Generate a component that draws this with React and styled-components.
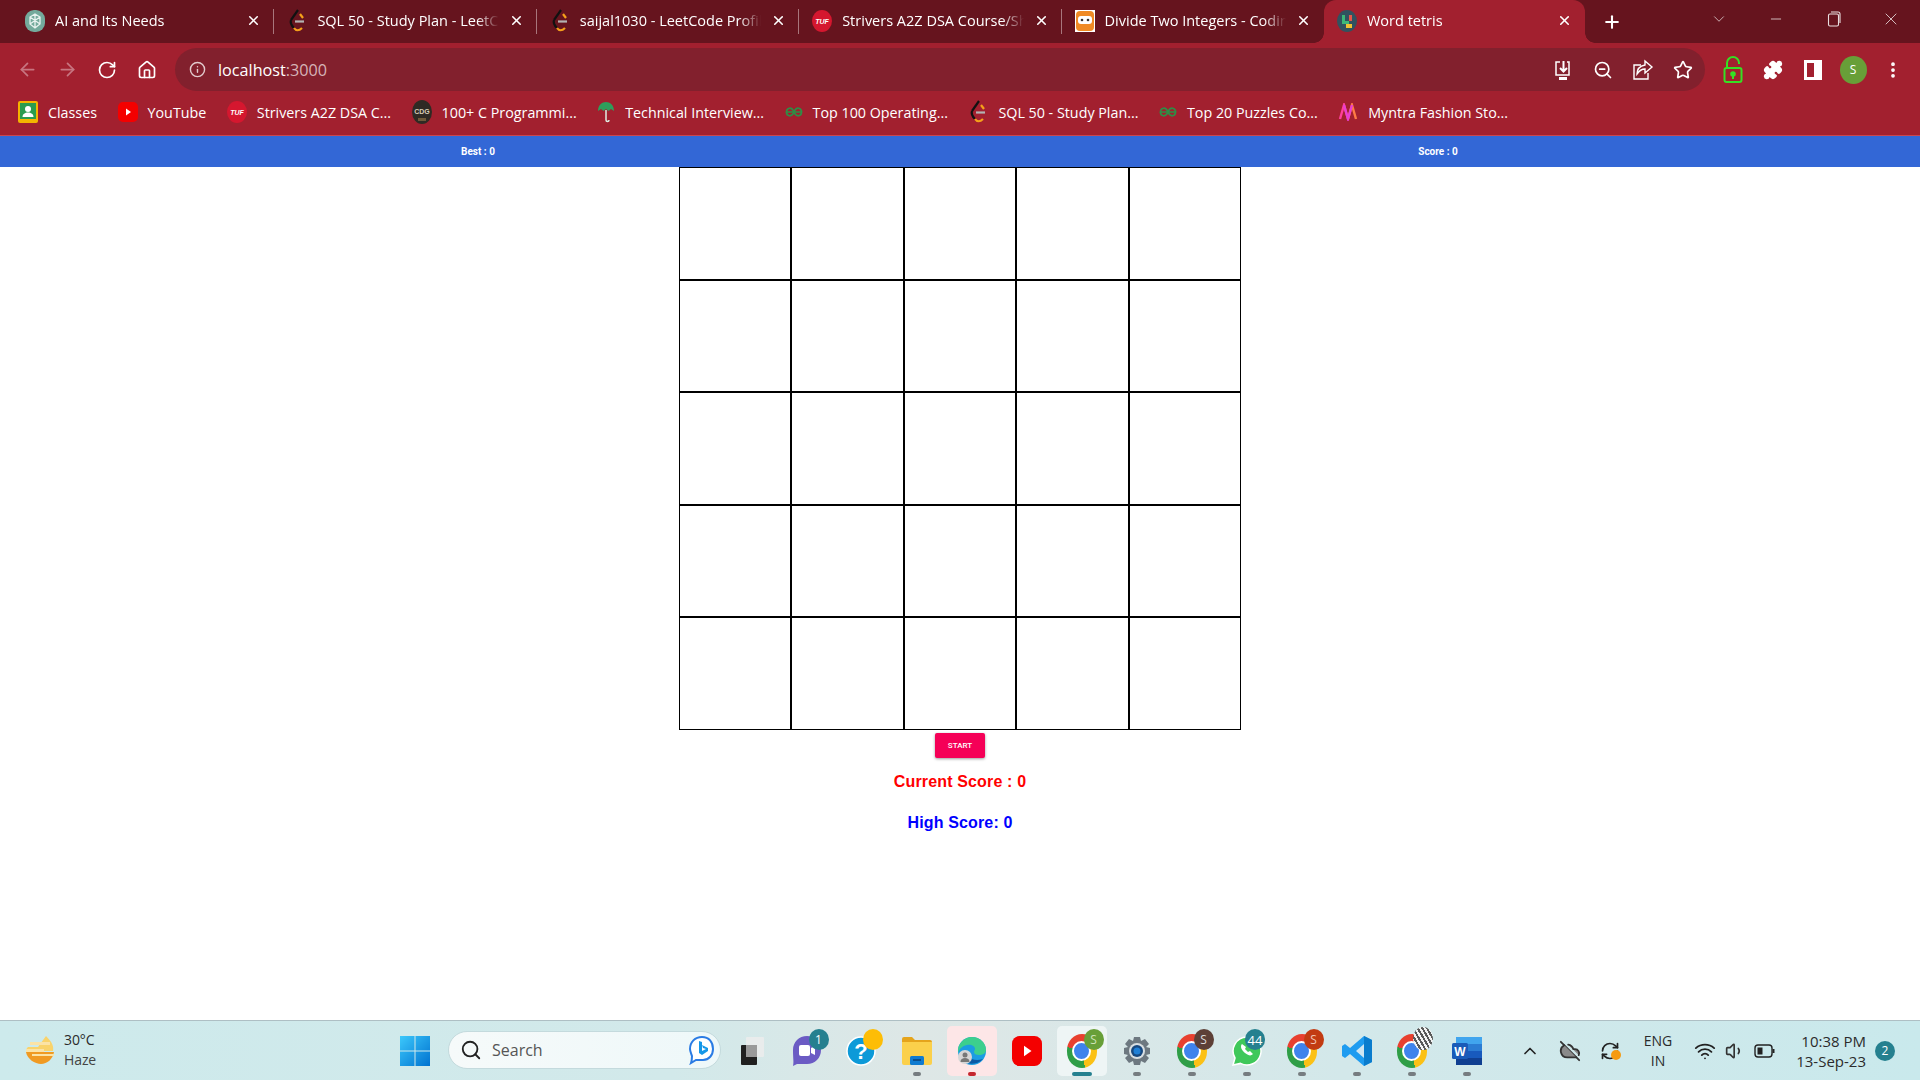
import React from "react";
import styled, { createGlobalStyle } from "styled-components";
import {
  ArrowLeft, ArrowRight, RotateCw, Home, Info, ZoomOut, Star, Puzzle, X, Plus,
  ChevronDown, ChevronUp, Minus, EllipsisVertical, Wifi, Volume1, CloudOff, RefreshCw, Search,
} from "lucide-react";

const GlobalStyle = createGlobalStyle`
  html, body { margin: 0; padding: 0; background: #fff; }
  * { box-sizing: border-box; }
`;

const Page = styled.div`
  width: 1920px;
  height: 1080px;
  display: flex;
  flex-direction: column;
  overflow: hidden;
  font-family: "Open Sans", "Liberation Sans", sans-serif;
`;

/* ---- tab strip ---- */
const TabStrip = styled.div`
  height: 43px;
  flex: none;
  display: flex;
  align-items: stretch;
  padding-left: 12px;
  background: #66141e;
  color: #fff;
`;

const Tab = styled.div`
  position: relative;
  width: ${(p) => (p.$active ? "261px" : "262.4px")};
  display: flex;
  align-items: center;
  gap: 10px;
  padding: 0 13px 2px;
  font-size: 14.5px;
  background: ${(p) => (p.$active ? "#a2202f" : "transparent")};
  border-radius: ${(p) => (p.$active ? "12px 12px 0 0" : "0")};
  &::after {
    content: "";
    display: ${(p) => (p.$sep ? "block" : "none")};
    position: absolute;
    right: 0;
    top: 9px;
    width: 1px;
    height: 25px;
    background: #a8767c;
  }
`;

/* the concave corners at the foot of the active tab */
const TabFlare = styled.span`
  position: absolute;
  bottom: 0;
  ${(p) => (p.$side === "left" ? "left: -10px;" : "right: -10px;")}
  width: 10px;
  height: 10px;
  background: radial-gradient(
    circle at ${(p) => (p.$side === "left" ? "0 0" : "100% 0")},
    transparent 9.5px,
    #a2202f 10px
  );
`;

const TabTitle = styled.span`
  flex: 1;
  overflow: hidden;
  white-space: nowrap;
  -webkit-mask-image: linear-gradient(to right, #000 calc(100% - 22px), transparent);
  mask-image: linear-gradient(to right, #000 calc(100% - 22px), transparent);
`;

const NewTab = styled.div`
  display: flex;
  align-items: center;
  margin-left: 17px;
`;

const WindowControls = styled.div`
  margin-left: auto;
  display: flex;
  align-items: flex-start;
  padding-top: 6px;
`;

const WindowButton = styled.div`
  width: 57.5px;
  height: 26px;
  display: flex;
  align-items: center;
  justify-content: center;
  color: #eadfe0;
`;

const RestoreIcon = () => (
  <svg width="14" height="16" viewBox="0 0 14 16" fill="none" stroke="#eadfe0" strokeWidth="1.1">
    <rect x="1.5" y="3" width="10" height="12" rx="1.5" />
    <path d="M4 1h7a2 2 0 0 1 2 2v9" />
  </svg>
);

/* ---- toolbar ---- */
const Toolbar = styled.div`
  height: 53px;
  flex: none;
  display: flex;
  align-items: flex-start;
  padding: 5px 0 0 7px;
  background: #a2202f;
  color: #fff;
`;

const NavButton = styled.div`
  width: 40px;
  height: 43px;
  display: flex;
  align-items: center;
  justify-content: center;
  color: ${(p) => (p.$muted ? "#c77580" : "#fff")};
`;

const Omnibox = styled.div`
  width: 1530px;
  height: 43px;
  margin-left: 8px;
  display: flex;
  align-items: center;
  padding: 0 2px 0 14px;
  border-radius: 22px;
  background: #82202d;
  font-size: 16.2px;
`;

const Url = styled.span`
  margin-left: 12px;
  color: #fff;
  span { color: #d6b4b8; }
`;

const OmniActions = styled.div`
  margin-left: auto;
  display: flex;
  color: #dcc4c8;
`;

const ToolbarActions = styled.div`
  display: flex;
  margin-left: 8px;
`;

const Avatar = styled.div`
  width: 27px;
  height: 28px;
  border-radius: 50%;
  display: flex;
  align-items: center;
  justify-content: center;
  background: #689f38;
  color: #fff;
  font-size: 12px;
`;

/* ---- bookmarks ---- */
const BookmarksBar = styled.div`
  height: 40px;
  flex: none;
  display: flex;
  align-items: flex-start;
  padding: 4px 0 0 18px;
  background: #a2202f;
  color: #fff;
  font-size: 14.3px;
  border-bottom: 1px solid #c9454f;
`;

const Bookmark = styled.div`
  display: flex;
  align-items: center;
  gap: 10px;
  height: 24px;
  white-space: nowrap;
  margin-right: 20.5px;
`;

/* ---- the game ---- */
const ScoreBar = styled.div`
  height: 31px;
  flex: none;
  display: grid;
  grid-template-columns: 1fr 1fr;
  align-items: center;
  background: #3367d6;
  color: #fff;
  font-family: Roboto, sans-serif;
  font-size: 10px;
  font-weight: 700;
  text-align: center;
`;

const ScoreLabel = styled.div`
  padding-right: 4px;
`;

const Main = styled.main`
  flex: 1;
  display: flex;
  flex-direction: column;
  align-items: center;
  background: #fff;
`;

const Board = styled.div`
  width: 562px;
  height: 563px;
  flex: none;
  display: grid;
  grid-template-columns: repeat(5, 1fr);
  grid-template-rows: repeat(5, 1fr);
`;

const Cell = styled.div`
  border: 1px solid #000;
`;

const StartButton = styled.button`
  width: 50px;
  height: 25px;
  margin-top: 3px;
  border: 0;
  border-radius: 2px;
  padding: 0;
  background: #f50057;
  color: #fff;
  font-family: Roboto, sans-serif;
  font-size: 8px;
  font-weight: 500;
  box-shadow: 0 1px 3px rgba(0, 0, 0, 0.4);
`;

const ScoreLine = styled.div`
  margin-top: ${(p) => p.$top}px;
  color: ${(p) => p.$color};
  font-family: "Liberation Sans", Arial, sans-serif;
  font-size: 16px;
  line-height: 18px;
  font-weight: 700;
  letter-spacing: 0.15px;
`;

/* ---- taskbar ---- */
const Taskbar = styled.div`
  height: 60px;
  flex: none;
  display: flex;
  align-items: stretch;
  border-top: 1px solid #aebfc4;
  background: linear-gradient(90deg, #cdeaec 0%, #d2e9ea 35%, #dee7e6 48%, #d3e8ea 70%, #c9e9ec 100%);
  color: #2b2b2b;
`;

const Weather = styled.div`
  width: 400px;
  display: flex;
  align-items: center;
  gap: 8px;
  padding: 0 0 2px 24px;
  font-size: 14px;
  line-height: 20px;
  letter-spacing: -0.1px;
`;

const WeatherText = styled.div`
  span { display: block; color: #444; }
`;

const StartSlot = styled.div`
  width: 30px;
  display: flex;
  align-items: center;
  justify-content: center;
`;

const SearchBox = styled.div`
  width: 273px;
  height: 38px;
  margin: 10px 3px 0 18px;
  display: flex;
  align-items: center;
  gap: 10px;
  padding: 0 5px 0 11px;
  border-radius: 19px;
  background: linear-gradient(90deg, #f6fafa, #eef8f9);
  border: 1px solid #c4dadd;
  color: #555;
  font-size: 16px;
  svg:last-child { margin-left: auto; }
`;

const AppSlot = styled.div`
  position: relative;
  width: ${(p) => p.$w || 55}px;
  display: flex;
  align-items: center;
  justify-content: center;
`;

const AppTile = styled.div`
  width: 50px;
  height: 50px;
  display: flex;
  align-items: center;
  justify-content: center;
  border-radius: 5px;
  background: ${(p) => p.$bg || "transparent"};
`;

const RunDot = styled.div`
  position: absolute;
  bottom: 4px;
  left: 50%;
  transform: translateX(-50%);
  width: ${(p) => p.$w || 8}px;
  height: 4px;
  border-radius: 2px;
  background: ${(p) => p.$color || "#767c80"};
`;

const Badge = styled.div`
  position: absolute;
  top: 8px;
  left: 50%;
  margin-left: ${(p) => p.$x ?? 2}px;
  min-width: 20px;
  height: 21px;
  padding: 0 3px;
  border-radius: 50%;
  display: flex;
  align-items: center;
  justify-content: center;
  background: ${(p) => p.$bg};
  color: ${(p) => p.$fg || "#fff"};
  font-size: ${(p) => p.$size || 12}px;
`;

const Tray = styled.div`
  margin-left: auto;
  display: flex;
  align-items: center;
  padding-right: 25px;
  font-size: 14px;
`;

const TrayIcon = styled.div`
  width: ${(p) => p.$w || 40}px;
  display: flex;
  justify-content: center;
  position: relative;
`;

const SyncDot = styled.div`
  position: absolute;
  right: 9px;
  bottom: 1px;
  width: 10px;
  height: 10px;
  border-radius: 50%;
  background: #f59a10;
`;

const Lang = styled.div`
  width: 56px;
  text-align: center;
  line-height: 20px;
`;

const Clock = styled.div`
  width: 82px;
  font-size: 15px;
  white-space: nowrap;
  line-height: 20px;
  display: flex;
  flex-direction: column;
  align-items: flex-end;
`;

const NotifyBadge = styled.div`
  width: 20px;
  height: 20px;
  margin-left: 9px;
  border-radius: 50%;
  display: flex;
  align-items: center;
  justify-content: center;
  background: #25808f;
  color: #fff;
  font-size: 12px;
`;

const ChromeBall = styled.div`
  width: 30px;
  height: 34px;
  border-radius: 50% / 48%;
  background: conic-gradient(from 50deg, #fbc116 0 120deg, #2f9e47 120deg 235deg, #e8402f 235deg 360deg);
  display: flex;
  align-items: center;
  justify-content: center;
  &::after {
    content: "";
    width: 15px;
    height: 16px;
    border-radius: 50%;
    background: #3f83ec;
    border: 2px solid #fff;
  }
`;

/* the last chrome profile has a picture rather than a letter */
const ProfilePicture = styled.div`
  position: absolute;
  top: 6px;
  left: 50%;
  margin-left: 1px;
  width: 20px;
  height: 23px;
  border-radius: 50%;
  background: repeating-linear-gradient(60deg, #f4f4f4 0 2px, #5a5a5a 2px 4px);
`;

/* favicons */
const GptIcon = () => (
  <svg width="20" height="22" viewBox="0 0 20 22">
    <rect width="20" height="22" rx="9" fill="#74aa9c" />
    <path d="M10 4l5 3v7l-5 4-5-4V7zM5 7l10 7M15 7L5 14M10 4v14" fill="none" stroke="#e9f3f0" strokeWidth="1.3" />
  </svg>
);
const LeetIcon = () => (
  <svg width="20" height="24" viewBox="0 0 20 24" fill="none" strokeWidth="2.2">
    <path d="M11 1L4 11" stroke="#111" />
    <path d="M4 11c-1 3 1 6 3 8" stroke="#111" />
    <path d="M7 19c2 3 5 3 8 0" stroke="#f5a01a" />
    <path d="M13 5l3 4" stroke="#f5a01a" />
    <path d="M8 12.5h9" stroke="#b3b3b3" />
  </svg>
);
const TufIcon = () => (
  <svg width="20" height="22" viewBox="0 0 20 22">
    <ellipse cx="10" cy="11" rx="10" ry="11" fill="#d5172f" />
    <text x="10" y="13.5" textAnchor="middle" fontSize="7" fontWeight="700" fontStyle="italic" fontFamily="Liberation Sans" fill="#fff">TUF</text>
  </svg>
);
const NinjaIcon = () => (
  <svg width="20" height="22" viewBox="0 0 20 22">
    <rect width="20" height="22" fill="#fff" />
    <rect x="1" y="1" width="18" height="20" rx="4" fill="#f08a24" />
    <rect x="3" y="6" width="14" height="8" rx="3" fill="#fff" />
    <circle cx="7" cy="10" r="1.3" fill="#333" />
    <circle cx="13" cy="10" r="1.3" fill="#333" />
  </svg>
);
const TetrisIcon = () => (
  <svg width="20" height="22" viewBox="0 0 20 22">
    <ellipse cx="10" cy="11" rx="10" ry="11" fill="#31525f" />
    <path d="M5 5h3v6h4v3H5z" fill="#3cb878" />
    <path d="M12 5h3v6h-3z" fill="#e2574c" />
    <path d="M9 14h6v4H9z" fill="#f2c230" />
  </svg>
);
const ClassroomIcon = () => (
  <svg width="20" height="22" viewBox="0 0 20 22">
    <rect width="20" height="22" rx="2" fill="#f4b400" />
    <rect x="2" y="2" width="16" height="16" fill="#2a9c4f" />
    <circle cx="10" cy="8" r="3" fill="#fff" />
    <path d="M4.5 16c0-3 2.5-4.5 5.5-4.5s5.500 1.500 5.500 4.500z" fill="#fff" />
  </svg>
);
const YoutubeIcon = ({ w = 20, h = 20 }) => (
  <svg width={w} height={h} viewBox="0 0 20 20">
    <rect width="20" height="20" rx="5" fill="#f40000" />
    <path d="M8 6.500l5 3.500-5 3.500z" fill="#fff" />
  </svg>
);
const CdgIcon = () => (
  <svg width="20" height="24" viewBox="0 0 20 24">
    <ellipse cx="10" cy="12" rx="10" ry="12" fill="#2f2a24" />
    <text x="10" y="14" textAnchor="middle" fontSize="7" fontWeight="700" fontFamily="Liberation Sans" fill="#d8cdb8">CDG</text>
    <path d="M6 18h8v3H6z" fill="#6f5a3a" />
  </svg>
);
const UmbrellaIcon = () => (
  <svg width="18" height="24" viewBox="0 0 18 24" fill="none">
    <path d="M1 11C1 5 5 2 9 2s8 3 8 9l-3-2-2.500 2L9 9l-2.500 2L4 9z" fill="#2e9e5b" />
    <path d="M9 10v10c0 2 3 2 3 0" stroke="#dfeee4" strokeWidth="1.5" />
  </svg>
);
const GfgIcon = () => (
  <svg width="18" height="14" viewBox="0 0 18 14" fill="none" stroke="#2f8d46" strokeWidth="1.700">
    <path d="M9 7H1.500c0-4 5-6 7.500 0 2.500 6 7.500 4 7.500 0H9" />
    <path d="M9 7c-2.500 6-7.500 4-7.500 0M9 7c2.500-6 7.500-4 7.500 0" />
  </svg>
);
const MyntraIcon = () => (
  <svg width="20" height="18" viewBox="0 0 20 18" fill="none" strokeWidth="2.400">
    <path d="M2 16L6 2l4 14" stroke="#ff3f9c" />
    <path d="M10 16l4-14 4 14" stroke="#ff7a45" />
    <path d="M6 2l4 14 4-14" stroke="#e83fd0" />
  </svg>
);

const DownloadBox = () => (
  <svg width="20" height="22" viewBox="0 0 20 22" fill="none" stroke="currentColor" strokeWidth="1.500">
    <path d="M7 3H3v13h13V3h-2" />
    <path d="M10.500 2v10M7 9l3.500 3.500L14 9" strokeWidth="2" />
    <path d="M6 19.500h8" strokeWidth="3" />
  </svg>
);
const ShareIcon = () => (
  <svg width="22" height="22" viewBox="0 0 22 22" fill="none" stroke="currentColor" strokeWidth="1.400">
    <path d="M9 6H2v14h14v-6" />
    <path d="M13 2l7 6-7 6v-4c-4 0-6 2-8 5 0-5 3-8 8-9z" />
  </svg>
);
const LockIcon = () => (
  <svg width="20" height="28" viewBox="0 0 20 28" fill="none" stroke="#35e024" strokeWidth="2">
    <rect x="1.500" y="12" width="17" height="14" rx="2" />
    <path d="M4 12V7a6 6 0 0 1 12 0v1" />
    <circle cx="10" cy="18" r="1.800" fill="#35e024" />
    <path d="M10 19v4" />
  </svg>
);
const SidePanel = () => (
  <svg width="18" height="20" viewBox="0 0 18 20">
    <path fillRule="evenodd" d="M0 0h18v20H0zM3 3v14h7V3z" fill="#fff" />
  </svg>
);
const BatteryIcon = () => (
  <svg width="22" height="14" viewBox="0 0 22 14" fill="none">
    <rect x="1" y="1" width="17" height="12" rx="3" stroke="#222" strokeWidth="1.400" />
    <rect x="3.500" y="3.500" width="5" height="7" fill="#222" />
    <path d="M19.500 5v4" stroke="#222" strokeWidth="2" />
  </svg>
);

/* taskbar icons */
const WindowsLogo = () => (
  <svg width="30" height="30" viewBox="0 0 30 30">
    <defs>
      <linearGradient id="win" x1="0" y1="0" x2="1" y2="1">
        <stop offset="0" stopColor="#3cc8fb" />
        <stop offset="1" stopColor="#0072d0" />
      </linearGradient>
    </defs>
    <path d="M0 0h14.500v14.500H0zM15.500 0H30v14.500H15.500zM0 15.500h14.500V30H0zM15.500 15.500H30V30H15.500z" fill="url(#win)" />
  </svg>
);
const WeatherIcon = () => (
  <svg width="32" height="30" viewBox="0 0 32 30">
    <path d="M22 1c6 6 8 10 7 15H2c0-2 1-3 2-4h10z" fill="#f9d36b" />
    <path d="M2 17h28c-1 7-7 12-13 12S3 24 2 17z" fill="#f09a22" />
    <path d="M6 7h20v3H6zM2 14h18v3H2zM8 19h22v2H8z" fill="#fbe3a6" />
  </svg>
);
const BingIcon = () => (
  <svg width="26" height="30" viewBox="0 0 26 30" fill="none">
    <path d="M13 2c7 0 11 5 11 12 0 6-4 11-10 11H7l-5 3c1-3 1-5 1-7C2 18 1 16 1 14 1 7 6 2 13 2z" fill="#fff" stroke="#2a7be4" strokeWidth="2" />
    <path d="M10 6l3 1v9l4-2-3-1-1-3 6 3v3l-6 4-3-2z" fill="#1597e8" />
  </svg>
);
const TaskViewIcon = () => (
  <svg width="24" height="30" viewBox="0 0 24 30">
    <rect x="0" y="9" width="16" height="20" rx="1" fill="#202020" />
    <rect x="5" y="1" width="18" height="20" rx="1" fill="#ececec" fillOpacity="0.85" />
    <rect x="5" y="9" width="11" height="12" fill="#9a9a9a" />
  </svg>
);
const MeetIcon = () => (
  <svg width="30" height="32" viewBox="0 0 30 32">
    <path d="M15 1c8 0 14 6 14 14s-6 14-14 14H5l-4 2c1-4 0-7 0-16C1 7 7 1 15 1z" fill="#6b5bc4" />
    <rect x="7" y="10" width="11" height="11" rx="2" fill="#fff" />
    <path d="M19 13l4-2v9l-4-2z" fill="#fff" />
  </svg>
);
const HelpIcon = () => (
  <svg width="30" height="32" viewBox="0 0 30 32">
    <circle cx="15" cy="16" r="14" fill="#0d9ad8" stroke="#fff" strokeWidth="1.500" />
    <text x="15" y="24" textAnchor="middle" fontSize="22" fontWeight="700" fontFamily="Liberation Sans" fill="#fff">?</text>
  </svg>
);
const FolderIcon = () => (
  <svg width="30" height="28" viewBox="0 0 30 28">
    <path d="M0 2a2 2 0 0 1 2-2h8l3 3h15a2 2 0 0 1 2 2v3H0z" fill="#e5a41c" />
    <path d="M0 5h30v21a2 2 0 0 1-2 2H2a2 2 0 0 1-2-2z" fill="#fbd04b" />
    <rect x="8" y="19" width="14" height="9" rx="1.500" fill="#0f7bd0" />
    <rect x="11" y="22" width="8" height="2" fill="#0a4e8c" />
  </svg>
);
const EdgeIcon = () => (
  <svg width="30" height="32" viewBox="0 0 30 32">
    <circle cx="15" cy="16" r="14" fill="#1b9de2" />
    <path d="M15 2c8 0 14 6 14 13 0 3-3 5-7 5-3 0-5-1-5-3 0-1 1-2 1-3 0-3-4-5-8-4C5 11 2 14 1 18 0 9 7 2 15 2z" fill="#3ccf8e" />
    <path d="M6 26c5 4 14 4 20-2-6 2-12 1-15-3z" fill="#0c59a4" />
    <circle cx="8" cy="22" r="7" fill="#d6d6d6" />
    <circle cx="8" cy="20" r="2.500" fill="#777" />
    <path d="M3.500 27c0-3 2-4 4.500-4s4.500 1 4.500 4z" fill="#777" />
  </svg>
);
const GearIcon = () => (
  <svg width="30" height="30" viewBox="0 0 30 30">
    <path d="M12 1h6l1 4 4-2 4 5-3 3 4 1v6l-4 1 3 3-4 5-4-2-1 4h-6l-1-4-4 2-4-5 3-3-4-1v-6l4-1-3-3 4-5 4 2z" fill="#6d7880" />
    <circle cx="15" cy="15" r="8" fill="#d9dfe2" />
    <circle cx="15" cy="15" r="6" fill="#17487f" />
    <circle cx="15" cy="15" r="3.500" fill="#1f7fd6" />
  </svg>
);
const WhatsappIcon = () => (
  <svg width="30" height="32" viewBox="0 0 30 32">
    <path d="M15 2a14 14 0 1 1-6.500 26.400L1 30l2-7A14 14 0 0 1 15 2z" fill="#3fc85a" stroke="#fff" strokeWidth="1.500" />
    <path d="M10 9c-2 2-1 6 3 9s6 3 8 1l-3-3-2 1-3-3 1-2z" fill="#fff" />
  </svg>
);
const VsCodeIcon = () => (
  <svg width="30" height="30" viewBox="0 0 30 30">
    <path d="M22 0l8 4v22l-8 4-14-12-5 4-3-2v-10l3-2 5 4z" fill="#1f9cf0" />
    <path d="M22 0l8 4v22l-8 4z" fill="#0a7ccd" />
    <path d="M22 8l-8 7 8 7z" fill="#d0e6f2" />
  </svg>
);
const WordIcon = () => (
  <svg width="30" height="28" viewBox="0 0 30 28">
    <rect x="4" y="0" width="26" height="7" fill="#41a5ee" />
    <rect x="4" y="7" width="26" height="7" fill="#2b7cd3" />
    <rect x="4" y="14" width="26" height="7" fill="#185abd" />
    <rect x="4" y="21" width="26" height="7" fill="#103f91" />
    <rect x="0" y="6" width="16" height="16" rx="1.500" fill="#1a5bb8" />
    <text x="8" y="19" textAnchor="middle" fontSize="12" fontWeight="700" fontFamily="Liberation Sans" fill="#fff">W</text>
  </svg>
);

const tabs = [
  { title: "AI and Its Needs", icon: <GptIcon /> },
  { title: "SQL 50 - Study Plan - LeetCode", icon: <LeetIcon /> },
  { title: "saijal1030 - LeetCode Profile", icon: <LeetIcon /> },
  { title: "Strivers A2Z DSA Course/Sheet", icon: <TufIcon /> },
  { title: "Divide Two Integers - Coding", icon: <NinjaIcon /> },
];

const bookmarks = [
  { title: "Classes", icon: <ClassroomIcon /> },
  { title: "YouTube", icon: <YoutubeIcon /> },
  { title: "Strivers A2Z DSA C...", icon: <TufIcon /> },
  { title: "100+ C Programmi...", icon: <CdgIcon /> },
  { title: "Technical Interview...", icon: <UmbrellaIcon /> },
  { title: "Top 100 Operating...", icon: <GfgIcon /> },
  { title: "SQL 50 - Study Plan...", icon: <LeetIcon /> },
  { title: "Top 20 Puzzles Co...", icon: <GfgIcon /> },
  { title: "Myntra Fashion Sto...", icon: <MyntraIcon /> },
];

const cells = Array.from({ length: 25 }, (_, i) => i);

export default function App() {
  return (
    <Page>
      <GlobalStyle />
      <TabStrip>
        {tabs.map((t, i) => (
          <Tab key={t.title} $sep={i < 4}>
            {t.icon}
            <TabTitle>{t.title}</TabTitle>
            <X size={15} strokeWidth={2.5} />
          </Tab>
        ))}
        <Tab $active>
          <TabFlare $side="left" />
          <TetrisIcon />
          <TabTitle>Word tetris</TabTitle>
          <X size={15} strokeWidth={2.5} />
          <TabFlare $side="right" />
        </Tab>
        <NewTab><Plus size={20} strokeWidth={2.5} /></NewTab>
        <WindowControls>
          <WindowButton><ChevronDown size={18} strokeWidth={1} /></WindowButton>
          <WindowButton><Minus size={16} strokeWidth={1.2} /></WindowButton>
          <WindowButton><RestoreIcon /></WindowButton>
          <WindowButton><X size={20} strokeWidth={1} /></WindowButton>
        </WindowControls>
      </TabStrip>

      <Toolbar>
        <NavButton $muted><ArrowLeft size={21} /></NavButton>
        <NavButton $muted><ArrowRight size={21} /></NavButton>
        <NavButton><RotateCw size={20} /></NavButton>
        <NavButton><Home size={20} /></NavButton>
        <Omnibox>
          <Info size={17} color="#e3cbce" />
          <Url>localhost<span>:3000</span></Url>
          <OmniActions>
            <NavButton><DownloadBox /></NavButton>
            <NavButton><ZoomOut size={20} /></NavButton>
            <NavButton><ShareIcon /></NavButton>
            <NavButton><Star size={20} /></NavButton>
          </OmniActions>
        </Omnibox>
        <ToolbarActions>
          <NavButton><LockIcon /></NavButton>
          <NavButton><Puzzle size={20} fill="#fff" /></NavButton>
          <NavButton><SidePanel /></NavButton>
          <NavButton><Avatar>S</Avatar></NavButton>
          <NavButton><EllipsisVertical size={20} strokeWidth={2.5} /></NavButton>
        </ToolbarActions>
      </Toolbar>

      <BookmarksBar>
        {bookmarks.map((b) => (
          <Bookmark key={b.title}>
            {b.icon}
            <span>{b.title}</span>
          </Bookmark>
        ))}
      </BookmarksBar>

      <ScoreBar>
        <ScoreLabel>Best : 0</ScoreLabel>
        <ScoreLabel>Score : 0</ScoreLabel>
      </ScoreBar>

      <Main>
        <Board>
          {cells.map((c) => <Cell key={c} />)}
        </Board>
        <StartButton>START</StartButton>
        <ScoreLine $color="#ff0000" $top={15}>Current Score : 0</ScoreLine>
        <ScoreLine $color="#0000ff" $top={23}>High Score: 0</ScoreLine>
      </Main>

      <Taskbar>
        <Weather>
          <WeatherIcon />
          <WeatherText>30°C<span>Haze</span></WeatherText>
        </Weather>
        <StartSlot><WindowsLogo /></StartSlot>
        <SearchBox>
          <Search size={22} color="#222" strokeWidth={2} />
          Search
          <BingIcon />
        </SearchBox>
        <AppSlot $w={57}><TaskViewIcon /></AppSlot>
        <AppSlot $w={51}><MeetIcon /><Badge $bg="#25808f">1</Badge></AppSlot>
        <AppSlot $w={57}><HelpIcon /><Badge $bg="#fdbd06" /></AppSlot>
        <AppSlot><FolderIcon /><RunDot /></AppSlot>
        <AppSlot>
          <AppTile $bg="#fde6e7"><EdgeIcon /></AppTile>
          <RunDot $color="#c4262e" />
        </AppSlot>
        <AppSlot><YoutubeIcon w={30} h={30} /></AppSlot>
        <AppSlot>
          <AppTile $bg="#eef5f5"><ChromeBall /></AppTile>
          <Badge $bg="#689f38" $fg="#cfe3b8">S</Badge>
          <RunDot $color="#25808f" $w={20} />
        </AppSlot>
        <AppSlot><GearIcon /><RunDot /></AppSlot>
        <AppSlot><ChromeBall /><Badge $bg="#5d4037" $fg="#ddd">S</Badge><RunDot /></AppSlot>
        <AppSlot><WhatsappIcon /><Badge $bg="#25808f" $x={-2} $size={13}>44</Badge><RunDot /></AppSlot>
        <AppSlot><ChromeBall /><Badge $bg="#c23b12" $fg="#f1c6b4">S</Badge><RunDot /></AppSlot>
        <AppSlot><VsCodeIcon /><RunDot /></AppSlot>
        <AppSlot><ChromeBall /><ProfilePicture /><RunDot /></AppSlot>
        <AppSlot><WordIcon /><RunDot /></AppSlot>
        <Tray>
          <TrayIcon><ChevronUp size={20} color="#222" /></TrayIcon>
          <TrayIcon><CloudOff size={22} color="#333" fill="#8a8a8a" /></TrayIcon>
          <TrayIcon><RefreshCw size={20} color="#222" /><SyncDot /></TrayIcon>
          <Lang>ENG<br />IN</Lang>
          <TrayIcon $w={38}><Wifi size={22} color="#222" /></TrayIcon>
          <TrayIcon $w={22}><Volume1 size={20} color="#333" /></TrayIcon>
          <TrayIcon $w={38}><BatteryIcon /></TrayIcon>
          <Clock><span>10:38 PM</span><span>13-Sep-23</span></Clock>
          <NotifyBadge>2</NotifyBadge>
        </Tray>
      </Taskbar>
    </Page>
  );
}
